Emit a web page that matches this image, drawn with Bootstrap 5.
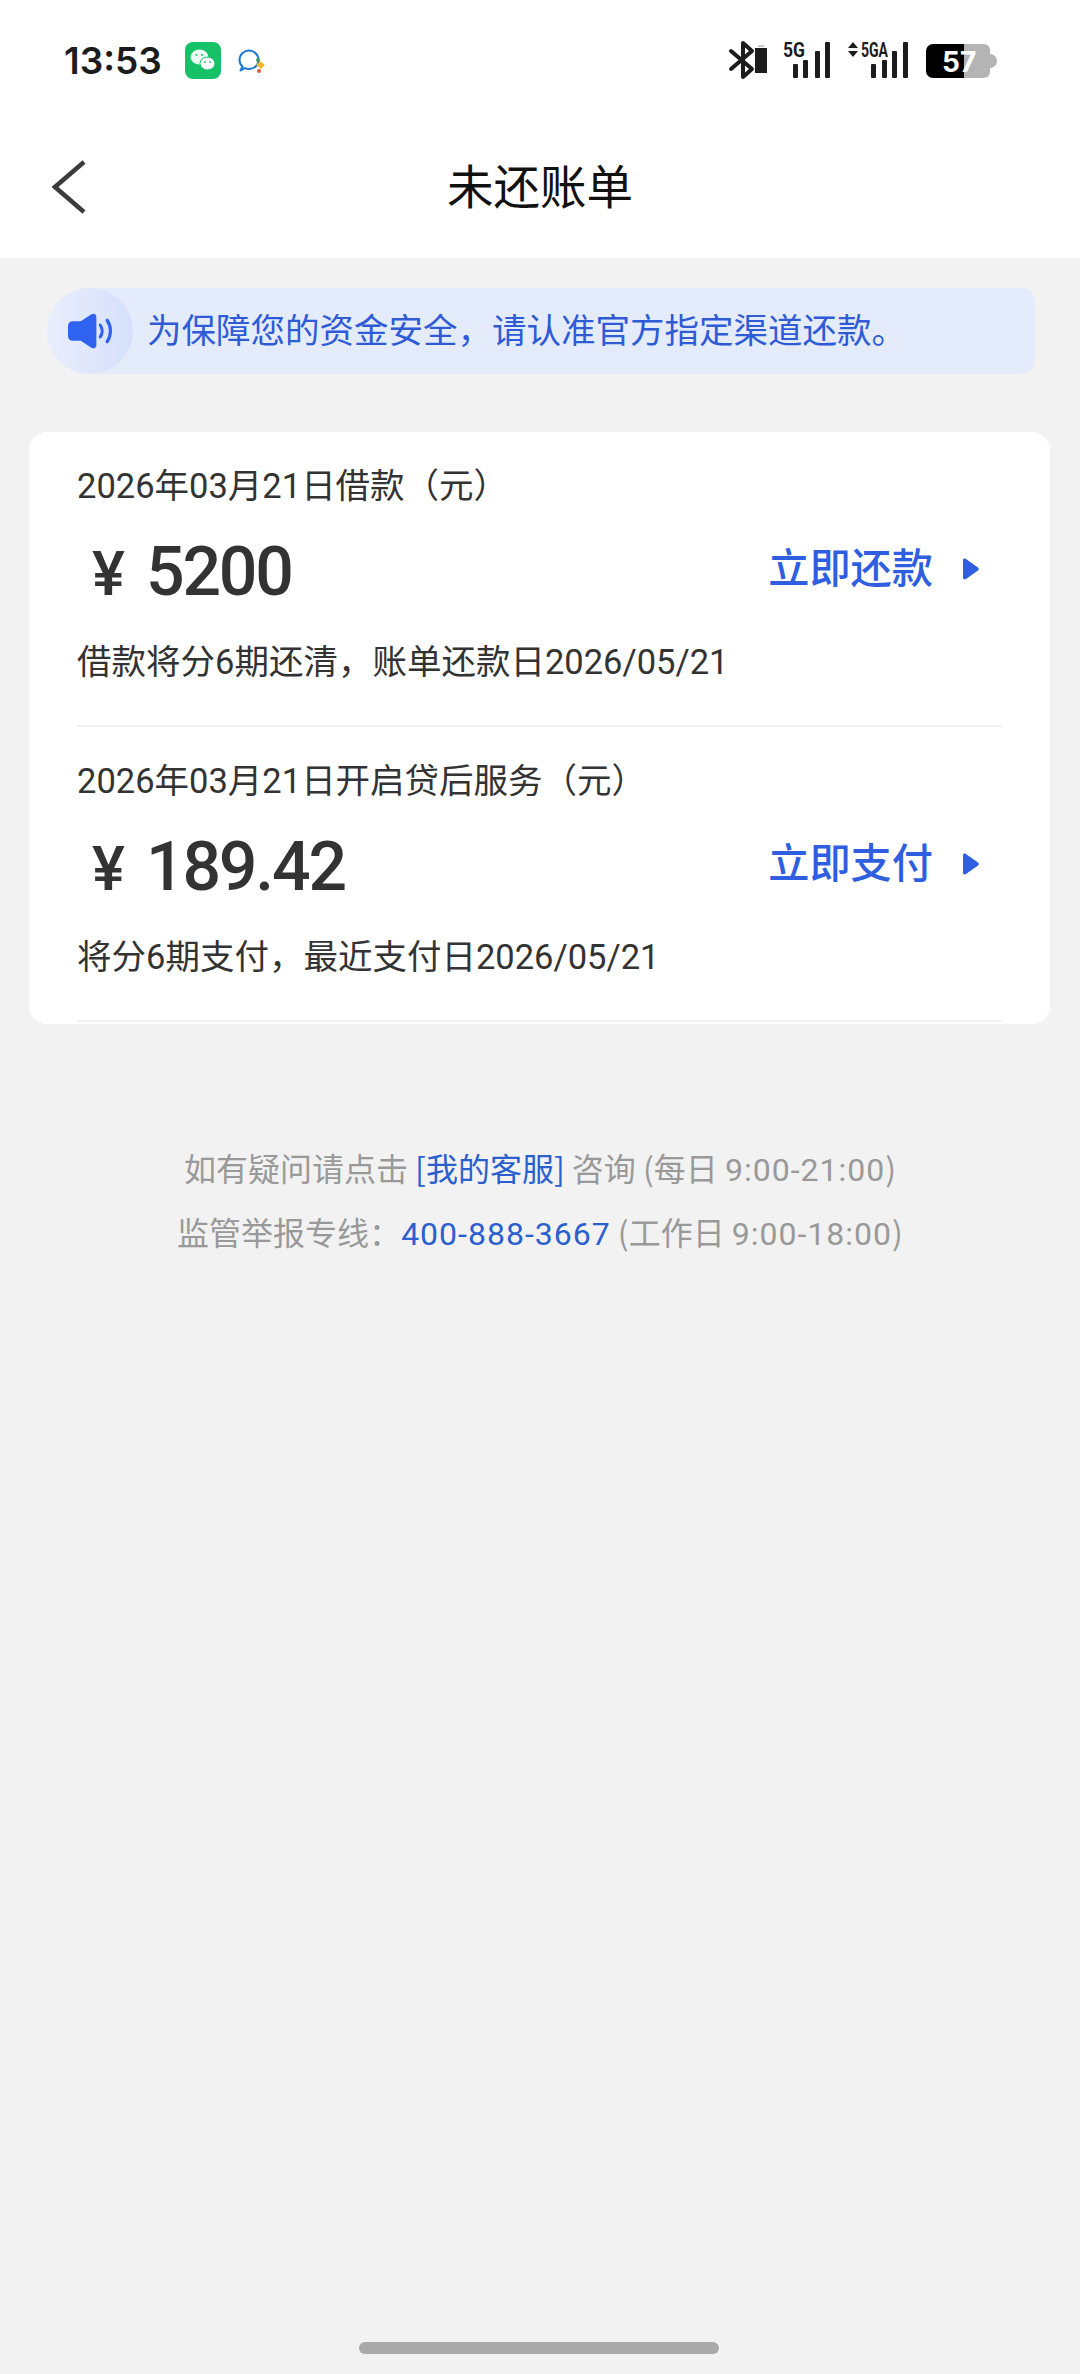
<!DOCTYPE html>
<html lang="zh-CN">
<head>
  <meta charset="UTF-8">
  <meta name="viewport" content="width=device-width, initial-scale=1">
  <title>未还账单</title>
  <link href="https://cdn.jsdelivr.net/npm/bootstrap@5.3.0/dist/css/bootstrap.min.css" rel="stylesheet">
  <style>
    body {
      background: #f2f2f2;
      min-height: 2374px;
      font-family: "Noto Sans CJK SC", "Noto Sans", sans-serif;
      color: #333;
    }
    .page-top { background: #fff; height: 258px; }
    .status-row { height: 120px; padding: 0 80px 0 64px; }
    .clock { font: 600 37px/1 Inter, Roboto, sans-serif; color: #1c1c1c; width: 121px; }
    .status-app { margin-left: 17px; margin-top: 2px; }
    .status-icons { font-family: Roboto, sans-serif; }
    .title-row { height: 138px; }
    .back-btn { left: 52px; top: 40px; }
    .page-title { font-size: 46.500px; line-height: 1; color: #111; margin-top: -9px; }
    .notice-bar {
      margin: 30px 45px 0 47px;
      height: 86px;
      background: #e4ebfb;
      border-radius: 43px 14px 14px 43px;
      font-size: 34.500px;
      color: #2f5bd6;
    }
    .notice-text { margin-top: -5px; }
    .notice-icon {
      width: 86px;
      height: 86px;
      margin-right: 14px;
      background: linear-gradient(90deg, #e9eefd, #d6e0fb);
    }
    .bill-card {
      margin: 58px 30px 0 29px;
      height: 592px;
      background: #fff;
      border-radius: 18px;
      overflow: hidden;
      padding: 0 48px;
    }
    .bill-item { height: 295px; padding-top: 28px; border-bottom: 2px solid #f1f1f1; }
    .bill-date, .bill-desc { font-size: 34.500px; line-height: 46px; color: #333; }
    .bill-date b, .bill-desc b, .num { font-family: Roboto, sans-serif; font-weight: 400; }
    .bill-amount { height: 100px; margin-top: 13px; margin-bottom: 14px; padding-left: 15px; padding-right: 23px; }
    .amount-val { font: 500 68px/1 Roboto, sans-serif; color: #333; letter-spacing: -2.200px; }
    .amount-val .yen { margin-right: 21px; letter-spacing: 0; font-size: 62px; }
    .pay-link { font-size: 41.200px; line-height: 1; color: #2f5fe0; margin-top: -13px; font-weight: 500; }
    .pay-arrow { margin-left: 29px; margin-top: 8px; }
    .help-text { margin-top: 111px; font-size: 32px; color: #999; }
    .help-line { height: 64px; line-height: 64px; }
    .help-text .num { letter-spacing: 1px; }
    .help-text a { color: #2b5fd0; text-decoration: none; }
    .home-bar { left: 359px; top: 2342px; width: 360px; height: 12px; background: #a9a9a9; }
  </style>
</head>
<body class="position-relative">
  <div class="page-top">
    <div class="status-row d-flex align-items-center">
      <span class="clock">13:53</span>
      <svg width="36" height="37" viewBox="0 0 36 37">
        <rect width="36" height="37" rx="8" fill="#16c268"/>
        <ellipse cx="14.500" cy="15" rx="9" ry="7.500" fill="#e9fbf0"/>
        <ellipse cx="22.500" cy="21.500" rx="7.500" ry="6.500" fill="#fff" stroke="#16c268" stroke-width="1"/>
        <circle cx="11.500" cy="13" r="1" fill="#16c268"/><circle cx="17" cy="13" r="1" fill="#16c268"/>
        <circle cx="20" cy="20" r=".9" fill="#16c268"/><circle cx="25" cy="20" r=".9" fill="#16c268"/>
      </svg>
      <svg class="status-app" width="28" height="25" viewBox="0 0 28 25">
        <path d="M4.500 17.500C2.500 15.800 1.500 13.600 1.500 11 1.500 5.500 6 1.500 11 1.500S20.500 5.500 20.500 11c0 5.200-4.300 9-9.500 9-1.500 0-3-.3-4.200-.9L2.500 21.500z" fill="none" stroke="#1d78d6" stroke-width="2" stroke-linejoin="round"/>
        <path d="M18 16l4-4 5 4-4 4z" fill="#f2b632"/><circle cx="20" cy="11" r="2" fill="#3f9e5c"/><circle cx="21" cy="22" r="2" fill="#e4573d"/>
      </svg>
      <svg class="status-icons ms-auto" width="272" height="48" viewBox="0 -4 272 48">
        <path d="M3 11l21 18-9 8V3l9 8L3 29" fill="none" stroke="#1c1c1c" stroke-width="4" stroke-linejoin="round" stroke-linecap="round"/>
        <path d="M27 8h12v25H27z" fill="#1c1c1c"/><path d="M30 5h6v2h-6z" fill="#ccc"/>
        <text x="55" y="17" font-size="21" font-weight="700" fill="#1c1c1c" textLength="22" lengthAdjust="spacingAndGlyphs">5G</text>
        <g fill="#1c1c1c">
          <rect x="65" y="24" width="5" height="14" rx="1"/><rect x="75" y="20" width="5" height="18" rx="1"/>
          <rect x="87" y="11" width="5" height="27" rx="1"/><rect x="97" y="2" width="5" height="36" rx="1"/>
          <path d="M120 8l5-6 5 6zM120 11l5 6 5-6z"/>
        </g>
        <text x="133" y="17" font-size="21" font-weight="700" fill="#1c1c1c" textLength="27" lengthAdjust="spacingAndGlyphs">5GA</text>
        <g fill="#1c1c1c">
          <rect x="143" y="24" width="5" height="14" rx="1"/><rect x="154" y="20" width="5" height="18" rx="1"/>
          <rect x="164" y="11" width="5" height="27" rx="1"/><rect x="175" y="2" width="5" height="36" rx="1"/>
        </g>
        <path d="M236 4h20a6 6 0 0 1 6 6v4a5 5 0 0 1 0 14v4a6 6 0 0 1-6 6h-20z" fill="#b4b4b4"/>
        <path d="M236 4h-31a7 7 0 0 0-7 7v20a7 7 0 0 0 7 7h31z" fill="#000"/>
        <text x="214" y="32" font-size="28" font-weight="700" fill="#fff" font-family="Inter, Roboto, sans-serif">57</text>
      </svg>
    </div>
    <div class="title-row position-relative d-flex align-items-center justify-content-center">
      <svg class="back-btn position-absolute" width="34" height="54" viewBox="0 0 34 54">
        <path d="M32 2L3 27l29 25" fill="none" stroke="#3c3c3c" stroke-width="4.500"/>
      </svg>
      <div class="page-title">未还账单</div>
    </div>
  </div>

  <div class="notice-bar d-flex align-items-center">
    <div class="notice-icon rounded-circle d-flex align-items-center justify-content-center flex-shrink-0">
      <svg width="45" height="36" viewBox="0 0 46 36">
        <path d="M5 8h8L24 1c3-1.500 5 0 5 3v28c0 3-2 4.500-5 3L13 28H5c-3 0-5-2-5-5V13c0-3 2-5 5-5z" fill="#2f62ee"/>
        <path d="M33 12c2.500 3.500 2.500 8.500 0 12M40 7c4.500 6.500 4.500 15.500 0 22" fill="none" stroke="#2f62ee" stroke-width="3.200" stroke-linecap="round"/>
      </svg>
    </div>
    <span class="notice-text">为保障您的资金安全，请认准官方指定渠道还款。</span>
  </div>

  <div class="bill-card">
    <div class="bill-item">
      <div class="bill-date"><b>2026</b>年<b>03</b>月<b>21</b>日借款（元）</div>
      <div class="bill-amount d-flex align-items-center justify-content-between">
        <span class="amount-val"><span class="yen">¥</span>5200</span>
        <a class="pay-link d-flex align-items-center text-decoration-none" href="#">立即还款
          <svg class="pay-arrow" width="17" height="22" viewBox="0 0 17 22"><path d="M1 2.500c0-2 1.500-2.500 3-1.500l12 8.500c1 .8 1 2.200 0 3L4 21c-1.500 1-3 .5-3-1.500z" fill="#2f5fe0"/></svg>
        </a>
      </div>
      <div class="bill-desc">借款将分<b>6</b>期还清，账单还款日<b>2026/05/21</b></div>
    </div>
    <div class="bill-item">
      <div class="bill-date"><b>2026</b>年<b>03</b>月<b>21</b>日开启贷后服务（元）</div>
      <div class="bill-amount d-flex align-items-center justify-content-between">
        <span class="amount-val"><span class="yen">¥</span>189.42</span>
        <a class="pay-link d-flex align-items-center text-decoration-none" href="#">立即支付
          <svg class="pay-arrow" width="17" height="22" viewBox="0 0 17 22"><path d="M1 2.500c0-2 1.500-2.500 3-1.500l12 8.500c1 .8 1 2.200 0 3L4 21c-1.500 1-3 .5-3-1.500z" fill="#2f5fe0"/></svg>
        </a>
      </div>
      <div class="bill-desc">将分<b>6</b>期支付，最近支付日<b>2026/05/21</b></div>
    </div>
  </div>

  <div class="help-text text-center">
    <div class="help-line">如有疑问请点击 <a href="#">[我的客服]</a> 咨询 (每日 <span class="num">9:00-21:00</span>)</div>
    <div class="help-line">监管举报专线：<a class="num" href="#">400-888-3667</a> (工作日 <span class="num">9:00-18:00</span>)</div>
  </div>

  <div class="home-bar position-absolute rounded-pill"></div>

  <script src="https://cdn.jsdelivr.net/npm/bootstrap@5.3.0/dist/js/bootstrap.bundle.min.js"></script>
</body>
</html>
